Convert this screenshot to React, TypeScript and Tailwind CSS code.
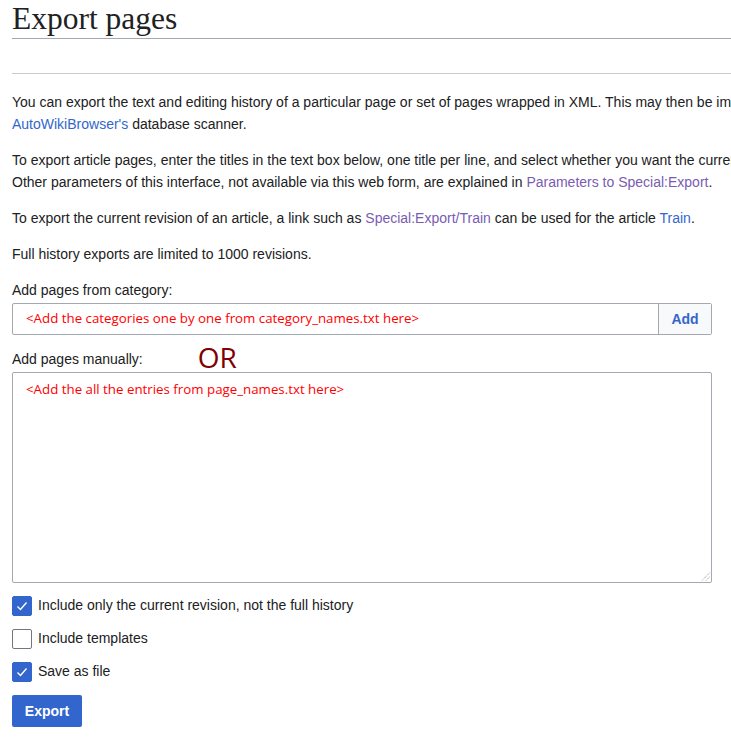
import React, { useState } from "react";

const Check: React.FC<{ checked: boolean; onClick: () => void }> = ({ checked, onClick }) => (
  <button
    type="button"
    onClick={onClick}
    className={
      checked
        ? "w-5 h-5 shrink-0 rounded-[2px] bg-[#3366cc] border border-[#3366cc] flex items-center justify-center"
        : "w-5 h-5 shrink-0 rounded-[2px] bg-white border border-[#72777d] flex items-center justify-center"
    }
  >
    {checked && (
      <svg width="14" height="14" viewBox="0 0 14 14" fill="none">
        <polyline points="2.5,7.5 5.5,10.5 11.5,3.5" stroke="#fff" strokeWidth="1.4" />
      </svg>
    )}
  </button>
);

const App: React.FC = () => {
  const [current, setCurrent] = useState(true);
  const [templates, setTemplates] = useState(false);
  const [saveFile, setSaveFile] = useState(true);

  return (
    <div className="w-[731px] h-[742px] overflow-hidden bg-white text-[#202122] font-['Liberation_Sans',Arial,sans-serif]">
      <div className="pl-3 w-[1100px]">
        <h1 className="w-[719px] text-[31.5px] leading-[38px] border-b border-[#a2a9b1] font-['Liberation_Serif',Georgia,serif]">
          Export pages
        </h1>
        <div className="w-[719px] mt-[34px] border-b border-[#c8ccd1]" />

        <div className="mt-[17px] text-[14px] leading-[22px]">
          <p className="whitespace-nowrap">
            You can export the text and editing history of a particular page or set of pages wrapped in XML. This may then be imported into another wiki running MediaWiki software, transformed, or just kept for your private amusement. It can also be parsed with
            <br />
            <a className="text-[#3366cc]">AutoWikiBrowser's</a> database scanner.
          </p>
          <p className="mt-[14px] whitespace-nowrap">
            To export article pages, enter the titles in the text box below, one title per line, and select whether you want the current revision as well as all old revisions, with the page history lines, or the current revision with the info about the last edit.
            <br />
            Other parameters of this interface, not available via this web form, are explained in{" "}
            <a className="text-[#795cb2]">Parameters to Special:Export</a>.
          </p>
          <p className="mt-[14px] whitespace-nowrap">
            To export the current revision of an article, a link such as{" "}
            <a className="text-[#795cb2]">Special:Export/Train</a> can be used for the article{" "}
            <a className="text-[#3366cc]">Train</a>.
          </p>
          <p className="mt-[14px] whitespace-nowrap">Full history exports are limited to 1000 revisions.</p>
        </div>

        <form className="w-[700px] mt-[14px] text-[14px]">
          <div className="leading-[22px]">Add pages from category:</div>
          <div className="mt-[2px] flex h-8 border border-[#a2a9b1] rounded-[2px]">
            <div className="flex-1 flex items-center pl-[13px] text-[13.3px] text-[#ff0000] font-['Open_Sans','Noto_Sans',sans-serif]">
              &lt;Add the categories one by one from category_names.txt here&gt;
            </div>
            <button
              type="button"
              className="w-[53px] border-l border-[#a2a9b1] bg-[#f8f9fa] text-[#3366cc] font-bold"
            >
              Add
            </button>
          </div>

          <div className="mt-[8px] flex items-center h-[28px]">
            <span className="leading-[22px] pt-[3px]">Add pages manually:</span>
            <span className="ml-[55px] text-[28px] leading-[28px] text-[#800000] font-['Open_Sans','Noto_Sans',sans-serif]">
              OR
            </span>
          </div>

          <div className="relative mt-[1px] h-[211px] border border-[#a2a9b1] rounded-[2px] pl-[13px] pt-[7px]">
            <div className="text-[13.3px] text-[#ff0000] font-['Open_Sans','Noto_Sans',sans-serif]">
              &lt;Add the all the entries from page_names.txt here&gt;
            </div>
            <svg className="absolute right-[1px] bottom-[1px]" width="9" height="9" viewBox="0 0 9 9">
              <line x1="8.5" y1="1" x2="1" y2="8.5" stroke="#8a8a8a" strokeWidth="1" strokeDasharray="1 1" />
              <line x1="8.5" y1="5" x2="5" y2="8.5" stroke="#8a8a8a" strokeWidth="1" strokeDasharray="1 1" />
            </svg>
          </div>

          <div className="mt-3 flex flex-col gap-3">
            <label className="flex items-center gap-[6px]">
              <Check checked={current} onClick={() => setCurrent(!current)} />
              <span>Include only the current revision, not the full history</span>
            </label>
            <label className="flex items-center gap-[6px]">
              <Check checked={templates} onClick={() => setTemplates(!templates)} />
              <span>Include templates</span>
            </label>
            <label className="flex items-center gap-[6px]">
              <Check checked={saveFile} onClick={() => setSaveFile(!saveFile)} />
              <span>Save as file</span>
            </label>
          </div>

          <button
            type="button"
            className="mt-[13px] w-[70px] h-8 rounded-[2px] bg-[#3366cc] text-white font-bold"
          >
            Export
          </button>
        </form>
      </div>
    </div>
  );
};

export default App;
